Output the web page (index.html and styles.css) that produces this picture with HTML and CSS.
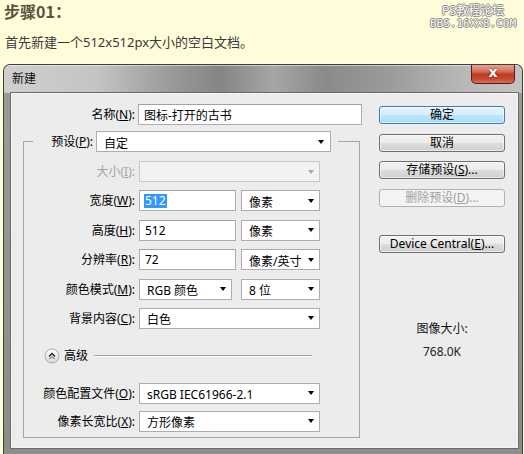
FILE: index.html
```html
<!DOCTYPE html>
<html lang="zh-CN">
<head>
<meta charset="utf-8">
<title>新建</title>
<link rel="stylesheet" href="styles.css">
</head>
<body>
<div class="page">
  <div class="intro">
    <h2 class="step">步骤01：</h2>
    <p class="desc">首先新建一个512x512px大小的空白文档。</p>
    <div class="watermark"><span class="wm-top">PS教程论坛</span><span class="wm-bottom">BBS.16XX8.COM</span></div>
  </div>

  <div class="dialog">
    <div class="titlebar">
      <span class="title">新建</span>
      <span class="close">x</span>
    </div>
    <div class="frame">
      <div class="client">
        <div class="form">
          <div class="row name-row">
            <span class="lbl name-lbl">名称(<u>N</u>):</span>
            <div class="field name-field">图标-打开的古书</div>
          </div>

          <fieldset class="group">
            <legend class="preset">
              <span class="lbl preset-lbl">预设(<u>P</u>):</span>
              <div class="combo preset-combo"><span>自定</span><i class="arrow"></i></div>
            </legend>

            <div class="rows rows-a">
              <div class="row">
                <span class="lbl grp-lbl disabled-text">大小(<u>I</u>):</span>
                <div class="combo wide disabled"><span></span><i class="arrow"></i></div>
              </div>
              <div class="row">
                <span class="lbl grp-lbl">宽度(<u>W</u>):</span>
                <div class="field num"><span class="sel">512</span></div>
                <div class="combo unit"><span>像素</span><i class="arrow"></i></div>
              </div>
              <div class="row">
                <span class="lbl grp-lbl">高度(<u>H</u>):</span>
                <div class="field num">512</div>
                <div class="combo unit"><span>像素</span><i class="arrow"></i></div>
              </div>
              <div class="row">
                <span class="lbl grp-lbl">分辨率(<u>R</u>):</span>
                <div class="field num">72</div>
                <div class="combo unit"><span>像素/英寸</span><i class="arrow"></i></div>
              </div>
              <div class="row">
                <span class="lbl grp-lbl">颜色模式(<u>M</u>):</span>
                <div class="combo mode"><span>RGB 颜色</span><i class="arrow"></i></div>
                <div class="combo unit bits"><span>8 位</span><i class="arrow"></i></div>
              </div>
              <div class="row">
                <span class="lbl grp-lbl">背景内容(<u>C</u>):</span>
                <div class="combo wide"><span>白色</span><i class="arrow"></i></div>
              </div>
            </div>

            <div class="advanced">
              <svg class="adv-icon" width="16" height="16" viewBox="0 0 16 16">
                <defs>
                  <linearGradient id="g" x1="0" y1="0" x2="0" y2="1">
                    <stop offset="0" stop-color="#ffffff"/>
                    <stop offset="1" stop-color="#d6d6d6"/>
                  </linearGradient>
                </defs>
                <circle cx="8" cy="8" r="7" fill="url(#g)" stroke="#a9a9a9"/>
                <path d="M5 8.5 L8 5.5 L11 8.5" fill="none" stroke="#222" stroke-width="1.3"/>
                <path d="M5.5 11 L8 8.5 L10.5 11" fill="none" stroke="#555" stroke-width="1"/>
              </svg>
              <span class="adv-text">高级</span>
              <span class="adv-line"></span>
            </div>

            <div class="rows rows-b">
              <div class="row">
                <span class="lbl grp-lbl">颜色配置文件(<u>O</u>):</span>
                <div class="combo wide"><span>sRGB IEC61966-2.1</span><i class="arrow"></i></div>
              </div>
              <div class="row">
                <span class="lbl grp-lbl">像素长宽比(<u>X</u>):</span>
                <div class="combo wide"><span>方形像素</span><i class="arrow"></i></div>
              </div>
            </div>
          </fieldset>
        </div>

        <div class="side">
          <div class="btns">
            <div class="btn default">确定</div>
            <div class="btn">取消</div>
            <div class="btn">存储预设(<u>S</u>)...</div>
            <div class="btn disabled">删除预设(<u>D</u>)...</div>
          </div>
          <div class="btn device">Device Central(<u>E</u>)...</div>
          <div class="info">
            <span>图像大小:</span>
            <span class="size">768.0K</span>
          </div>
        </div>
      </div>
    </div>
  </div>
</div>
</body>
</html>
```
FILE: styles.css
```css
* { box-sizing: border-box; }
html, body { margin: 0; padding: 0; }
body {
  width: 524px;
  height: 454px;
  overflow: hidden;
  background: #fffcd9;
  font-family: "Noto Sans", "Noto Sans CJK SC", sans-serif;
}
.page { position: relative; }

.intro { position: relative; }
.step {
  margin: 0;
  padding-left: 4px;
  font-family: "Noto Sans CJK SC", sans-serif;
  font-size: 16px;
  line-height: 22px;
  font-weight: bold;
  color: #5a533f;
}
.desc {
  margin: 11px 0 0;
  padding-left: 5px;
  font-family: "Noto Sans", "Noto Sans CJK SC", sans-serif;
  font-size: 13px;
  line-height: 18px;
  color: #3a3a3a;
}
.watermark {
  position: absolute;
  top: 3px;
  right: 8px;
  display: flex;
  flex-direction: column;
  align-items: center;
  gap: 1px;
  color: #fbfbf2;
  text-shadow: 1px 0 0 #8a8a8a, -1px 0 0 #8a8a8a, 0 1px 0 #8a8a8a, 0 -1px 0 #8a8a8a;
}
.wm-top {
  font-family: "Noto Sans CJK SC", sans-serif;
  font-size: 12px;
  line-height: 14px;
}
.wm-bottom {
  font-family: "DejaVu Sans Mono", monospace;
  font-size: 11px;
  line-height: 11px;
}

/* dialog window */
.dialog {
  margin: 13px 0 0 3px;
  width: 520px;
  height: 392px;
  border: 1px solid #3e3e3e;
  border-bottom: none;
  border-radius: 7px 7px 0 0;
  background: #8e8e8e;
  overflow: hidden;
  font-family: "Noto Sans", "Noto Sans CJK SC", sans-serif;
  font-size: 12px;
  color: #000;
}
.titlebar {
  height: 28px;
  display: flex;
  justify-content: space-between;
  align-items: flex-start;
  padding-left: 8px;
  background: linear-gradient(to right, #cfcfcf 0%, #c4c4c4 18%, #9a9a9a 32%, #858585 42%, #a6a6a6 52%, #8a8a8a 62%, #9c9c9c 75%, #b7b7b7 88%, #c3c3c3 100%);
  box-shadow: inset 0 1px 0 rgba(255,255,255,0.5);
}
.title {
  line-height: 28px;
  font-size: 12px;
  color: #111;
}
.close {
  width: 44px;
  height: 20px;
  margin-top: -1px;
  margin-right: 7px;
  border: 1px solid #5c1a10;
  border-top: none;
  border-radius: 0 0 5px 5px;
  background: linear-gradient(#e9a99a 0%, #d77a66 35%, #c0391f 55%, #c64a32 80%, #d8735c 100%);
  color: #fff;
  font-family: "DejaVu Sans", sans-serif;
  font-weight: bold;
  font-size: 14px;
  line-height: 16px;
  text-align: center;
  text-shadow: 0 0 2px #5a1508;
}
.frame {
  padding: 0 4px 0 7px;
  background: linear-gradient(#9a9a9a, #8b8b8b);
}
.client {
  height: 355px;
  border: 1px solid #f4f4f4;
  box-shadow: 0 0 0 1px #6c6c6c;
  background: #ececec;
  display: flex;
  padding-top: 10px;
}

/* form */
.form {
  width: 350px;
  display: flex;
  flex-direction: column;
}
.row {
  display: flex;
  align-items: center;
  height: 21px;
}
.lbl {
  text-align: right;
  white-space: nowrap;
  line-height: 21px;
}
.lbl u { text-decoration: underline; text-underline-offset: 1px; }
.name-lbl { width: 123px; margin-right: 3px; }
.field {
  height: 21px;
  background: #fff;
  border: 1px solid #abadb3;
  border-top-color: #a0a2a8;
  display: flex;
  align-items: center;
  padding-left: 5px;
  white-space: nowrap;
}
.name-field { width: 224px; }
.field.num { width: 97px; margin-right: 5px; }
.sel {
  background: #3399ff;
  color: #fff;
  line-height: 14px;
  padding: 0 1px;
  margin-left: -1px;
}

.combo {
  height: 21px;
  background: #fff;
  border: 1px solid #abadb3;
  display: flex;
  align-items: center;
  padding-left: 7px;
  padding-right: 5px;
  white-space: nowrap;
}
.combo span { padding-top: 2px; }
.arrow {
  margin-left: auto;
  width: 0;
  height: 0;
  border-left: 3.5px solid transparent;
  border-right: 3.5px solid transparent;
  border-top: 4px solid #000;
}
.combo.wide { width: 181px; }
.combo.unit { width: 79px; }
.combo.mode { width: 93px; margin-right: 9px; }
.combo.disabled { background: #f2f2f2; border-color: #c9c9c9; }
.combo.disabled .arrow { border-top-color: #a8a8a8; }
.disabled-text { color: #a3a3a3; }

.group {
  margin: 6px 0 0 11px;
  width: 337px;
  padding: 9px 0 5px 0;
  border: 1px solid #a5a5a5;
  min-width: 0;
}
.preset {
  display: flex;
  align-items: center;
  margin-left: 9px;
  padding: 0 7px 0 0;
  height: 21px;
}
.preset-lbl { width: 60px; margin-right: 3px; }
.combo.preset-combo { width: 235px; padding-right: 6px; }

.rows { display: flex; flex-direction: column; }
.rows-a { gap: 8.4px; }
.rows-b { gap: 7px; }
.grp-lbl { width: 111px; margin-right: 4px; }

.advanced {
  display: flex;
  align-items: center;
  height: 16px;
  margin: 19px 0 19px 20px;
}
.adv-icon { flex: none; }
.adv-text { margin-left: 4px; line-height: 16px; }
.adv-line {
  flex: 1;
  height: 2px;
  margin: 0 47px 0 6px;
  border-top: 1px solid #a0a0a0;
  border-bottom: 1px solid #ffffff;
}

/* right column */
.side {
  margin-left: 17px;
  width: 126px;
  display: flex;
  flex-direction: column;
  padding-top: 2px;
}
.btns { display: flex; flex-direction: column; gap: 9.7px; }
.btn {
  height: 18px;
  border: 1px solid #707070;
  border-radius: 3px;
  background: linear-gradient(#f2f2f2 0%, #ebebeb 50%, #dddddd 51%, #cfcfcf 100%);
  box-shadow: inset 0 0 0 1px rgba(255,255,255,0.55);
  display: flex;
  align-items: center;
  justify-content: center;
  white-space: nowrap;
  line-height: 16px;
}
.btn.default {
  border-color: #3c7fb1;
  background: linear-gradient(#e5f4fc 0%, #d4eefb 50%, #bfe6fb 51%, #a9dbf6 100%);
}
.btn.disabled {
  border-color: #adb2b5;
  background: #f4f4f4;
  color: #a0a0a0;
  box-shadow: none;
}
.btn.device { margin-top: 28px; }

.info {
  margin-top: 68px;
  display: flex;
  flex-direction: column;
  align-items: center;
  gap: 7px;
  line-height: 16px;
  color: #111;
}
.size { color: #222; }
```
